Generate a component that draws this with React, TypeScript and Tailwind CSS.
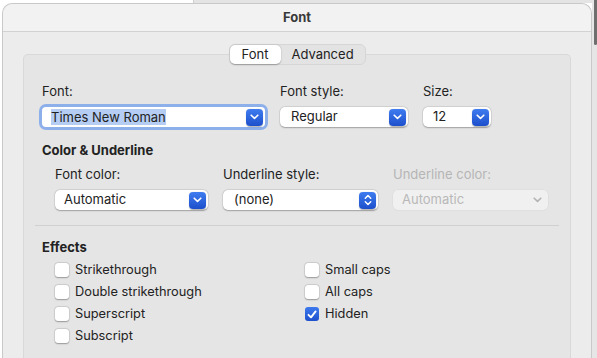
const font = { fontFamily: "Inter, 'Noto Sans', sans-serif" };

function Chevron({ className = "" }: { className?: string }) {
  return (
    <svg width="9" height="6" viewBox="0 0 9 6" className={className}>
      <path d="M1.2 1.2 L4.5 4.4 L7.8 1.2" fill="none" stroke="currentColor" strokeWidth="1.6" strokeLinecap="round" strokeLinejoin="round" />
    </svg>
  );
}

function UpDown() {
  return (
    <svg width="8" height="12" viewBox="0 0 8 12">
      <path d="M1.3 4.2 L4 1.5 L6.7 4.2 M1.3 7.8 L4 10.5 L6.7 7.8" fill="none" stroke="white" strokeWidth="1.5" strokeLinecap="round" strokeLinejoin="round" />
    </svg>
  );
}

function BlueButton({ updown = false }: { updown?: boolean }) {
  return (
    <span className="flex h-[17px] w-[17px] items-center justify-center rounded-[4px] bg-gradient-to-b from-[#3f7cf0] to-[#1d4fcb] text-white shadow-[0_0.5px_1px_rgba(0,0,0,0.3)]">
      {updown ? <UpDown /> : <Chevron />}
    </span>
  );
}

/** Mac-style popup button. */
function Popup({
  value,
  width,
  pad = 10,
  updown = false,
  disabled = false,
}: {
  value: string;
  width: number;
  pad?: number;
  updown?: boolean;
  disabled?: boolean;
}) {
  return (
    <div
      className={`flex h-[20px] items-center justify-between rounded-[5px] pr-[2px] text-[13px] ${
        disabled
          ? "bg-[#f0f0f0] text-[#b8b8b8] shadow-[0_0_0_0.5px_rgba(0,0,0,0.05)]"
          : "bg-white text-[#222] shadow-[0_0.5px_1.5px_rgba(0,0,0,0.28),0_0_0_0.5px_rgba(0,0,0,0.08)]"
      }`}
      style={{ width, paddingLeft: pad }}
    >
      <span>{value}</span>
      {disabled ? (
        <span className="mr-[4px] text-[#b3b3b3]">
          <Chevron />
        </span>
      ) : (
        <BlueButton updown={updown} />
      )}
    </div>
  );
}

function Check({ label, checked = false }: { label: string; checked?: boolean }) {
  return (
    <div className="flex h-[22px] items-center gap-[6px]">
      {checked ? (
        <span className="flex h-[14px] w-[14px] items-center justify-center rounded-[3px] bg-gradient-to-b from-[#3d79ee] to-[#1e50cb]">
          <svg width="10" height="9" viewBox="0 0 10 9">
            <path d="M1.5 4.8 L4 7.3 L8.6 1.4" fill="none" stroke="white" strokeWidth="1.9" strokeLinecap="round" strokeLinejoin="round" />
          </svg>
        </span>
      ) : (
        <span className="h-[14px] w-[14px] rounded-[3px] bg-white shadow-[0_0.5px_1.5px_rgba(0,0,0,0.3),0_0_0_0.5px_rgba(0,0,0,0.1)]" />
      )}
      <span className="text-[12.8px] text-[#222]">{label}</span>
    </div>
  );
}

export default function App() {
  return (
    <div className="flex h-[358px] w-[597px] overflow-hidden bg-white" style={font}>
      <div className="w-[2px] shrink-0 bg-white" />

      <div className="flex w-[590px] shrink-0 flex-col">
        <div className="flex h-[3px] shrink-0">
          <div className="w-[191px] bg-white" />
          <div className="flex-1 border-l border-[#cfcfcf] bg-[#e4e4e4]" />
        </div>

        {/* window */}
        <div className="flex flex-1 flex-col rounded-t-[10px] border border-b-0 border-[#c9c9c9] bg-[#ececec]">
          <div className="flex h-[28px] shrink-0 items-center justify-center rounded-t-[10px] border-b border-[#d2d2d2] bg-[#f2f2f2] pt-[1px] text-[13px] font-bold text-[#3a3a3a]">
            Font
          </div>

          <div className="flex flex-1 flex-col px-[20px] pt-[12px]">
            <div className="relative z-10 flex justify-center">
              <div className="flex h-[21px] items-stretch rounded-[6px] border border-[#d6d6d6] bg-[#e3e3e3] text-[13px] text-[#222]">
                <div className="flex w-[51px] items-center justify-center rounded-[5px] bg-white shadow-[0_0.5px_1.5px_rgba(0,0,0,0.3)]">
                  Font
                </div>
                <div className="flex w-[84px] items-center justify-center">Advanced</div>
              </div>
            </div>

            <div className="-mt-[11px] flex-1 rounded-t-[5px] border border-b-0 border-[#d9d9d9] bg-[#e5e5e5] pl-[18px] pt-[28px] text-[13px] text-[#222]">
              {/* font row */}
              <div className="flex gap-[15px]">
                <div className="flex flex-col">
                  <span className="h-[16px] leading-[16px]">Font:</span>
                  <div className="mt-[8px] flex h-[20px] w-[223px] items-center justify-between rounded-[4px] bg-white pl-[9px] pr-[2px] ring-[3px] ring-[#8db0eb]">
                    <span className="bg-[#b5cdf3] leading-[16px]">Times New Roman</span>
                    <BlueButton />
                  </div>
                </div>
                <div className="flex flex-col">
                  <span className="h-[16px] leading-[16px]">Font style:</span>
                  <div className="mt-[8px]">
                    <Popup value="Regular" width={128} pad={11} />
                  </div>
                </div>
                <div className="flex flex-col">
                  <span className="h-[16px] leading-[16px]">Size:</span>
                  <div className="mt-[8px]">
                    <Popup value="12" width={68} pad={10} />
                  </div>
                </div>
              </div>

              {/* color & underline */}
              <div className="mt-[15px] h-[16px] font-bold leading-[16px]">Color &amp; Underline</div>
              <div className="mt-[8px] flex gap-[15px] pl-[13px]">
                <div className="flex flex-col">
                  <span className="h-[16px] leading-[16px]">Font color:</span>
                  <div className="mt-[8px]">
                    <Popup value="Automatic" width={153} pad={9} />
                  </div>
                </div>
                <div className="flex flex-col">
                  <span className="h-[16px] leading-[16px]">Underline style:</span>
                  <div className="mt-[8px]">
                    <Popup value="(none)" width={155} pad={11} updown />
                  </div>
                </div>
                <div className="flex flex-col">
                  <span className="h-[16px] leading-[16px] text-[#b5b5b5]">Underline color:</span>
                  <div className="mt-[8px]">
                    <Popup value="Automatic" width={155} pad={9} disabled />
                  </div>
                </div>
              </div>

              <div className="-ml-[7px] mr-[11px] mt-[15px] h-px bg-[#d0d0d0]" />

              {/* effects */}
              <div className="mt-[13px] h-[16px] font-bold leading-[16px]">Effects</div>
              <div className="mt-[4px] flex pl-[13px]">
                <div className="flex w-[250px] flex-col">
                  <Check label="Strikethrough" />
                  <Check label="Double strikethrough" />
                  <Check label="Superscript" />
                  <Check label="Subscript" />
                </div>
                <div className="flex flex-col">
                  <Check label="Small caps" />
                  <Check label="All caps" />
                  <Check label="Hidden" checked />
                </div>
              </div>
            </div>
          </div>
        </div>
      </div>

      <div className="flex w-[5px] shrink-0 justify-end bg-[#e6e6e6]">
        <div className="h-[45px] w-[3px] rounded-b-[2px] bg-[#6e6e6e]" />
      </div>
    </div>
  );
}
